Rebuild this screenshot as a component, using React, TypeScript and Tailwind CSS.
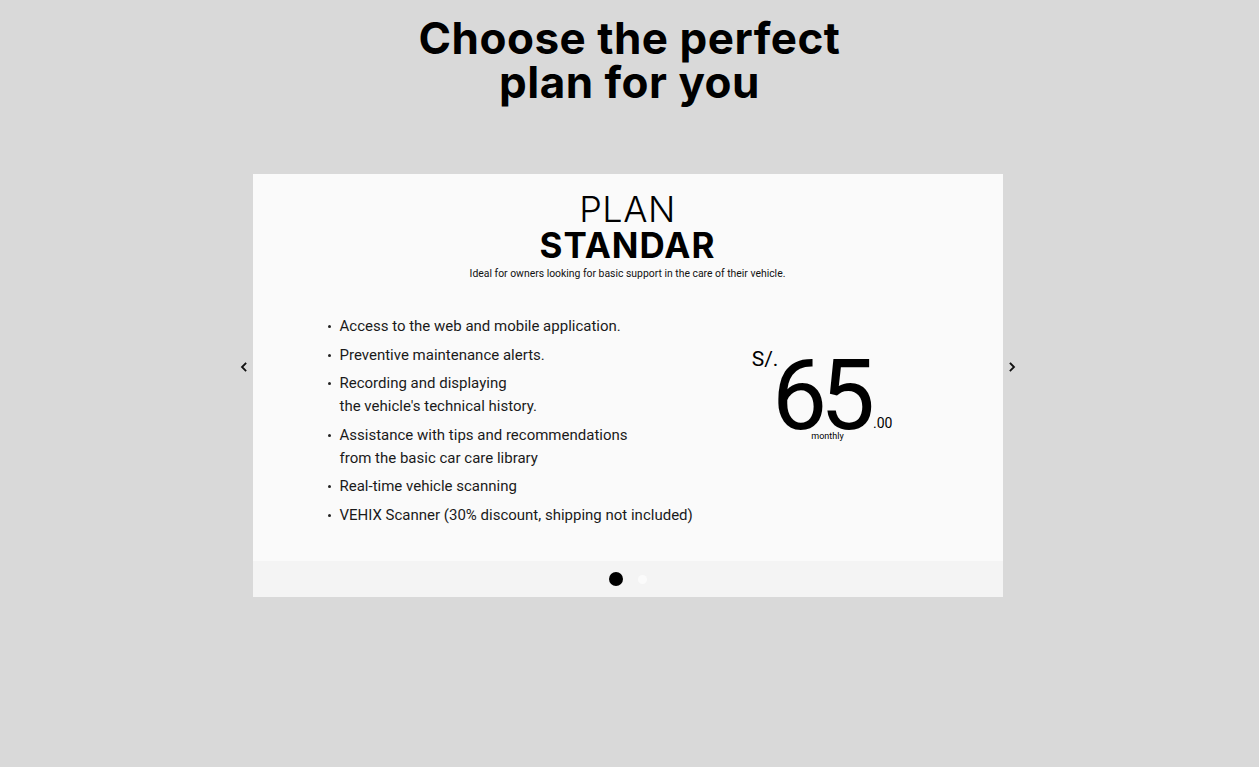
import React from "react";

const features: string[][] = [
  ["Access to the web and mobile application."],
  ["Preventive maintenance alerts."],
  ["Recording and displaying", "the vehicle's technical history."],
  ["Assistance with tips and recommendations", "from the basic car care library"],
  ["Real-time vehicle scanning"],
  ["VEHIX Scanner (30% discount, shipping not included)"],
];

function Chevron({ dir }: { dir: "left" | "right" }) {
  return (
    <svg width="8" height="10" viewBox="0 0 8 10" fill="none">
      <path
        d={dir === "left" ? "M5.5 1.5 L2 5 L5.5 8.5" : "M2.5 1.5 L6 5 L2.5 8.5"}
        stroke="#111"
        strokeWidth="1.8"
        strokeLinecap="square"
      />
    </svg>
  );
}

export default function App() {
  return (
    <div
      className="min-h-[767px] w-full bg-[#d9d9d9] flex flex-col items-center"
      style={{ fontFamily: "Roboto, 'Liberation Sans', sans-serif" }}
    >
      <h1
        className="pt-[16px] text-center text-[44px] leading-[44px] font-bold text-black tracking-[0.5px]"
        style={{ fontFamily: "Inter, 'Liberation Sans', sans-serif" }}
      >
        Choose the perfect
        <br />
        plan for you
      </h1>

      <div className="mt-[70px] flex items-start">
        <button className="mt-[173px] w-[18px] h-[40px] flex items-center justify-center">
          <Chevron dir="left" />
        </button>

        <div className="w-[750px] bg-[#fafafa] flex flex-col">
          <div className="h-[387px] flex flex-col">
            <div
              className="pt-[17px] flex flex-col items-center text-black"
              style={{ fontFamily: "Inter, 'Liberation Sans', sans-serif" }}
            >
              <div className="text-[36px] leading-[36px] font-light tracking-[0.5px]">PLAN</div>
              <div className="text-[35px] leading-[36px] font-bold tracking-[1px]">STANDAR</div>
              <div
                className="mt-[4px] text-[10.4px] leading-[14px] text-[#111]"
                style={{ fontFamily: "Roboto, sans-serif" }}
              >
                Ideal for owners looking for basic support in the care of their vehicle.
              </div>
            </div>

            <div className="mt-[34px] flex">
              <ul className="ml-[75px] flex flex-col gap-[5.5px] text-[15px] leading-[23px] text-[#1a1a1a]">
                {features.map((lines, i) => (
                  <li key={i} className="flex">
                    <span className="w-[12px] shrink-0 flex justify-start pt-[10px]">
                      <span className="block w-[3px] h-[3px] rounded-full bg-[#222]" />
                    </span>
                    <span className="flex flex-col">
                      {lines.map((l, j) => (
                        <span key={j}>{l}</span>
                      ))}
                    </span>
                  </li>
                ))}
              </ul>

              <div className="ml-auto mr-[110px] mt-[34px] flex items-start text-black">
                <span className="text-[21px] leading-[21px] -mr-[6.5px]">S/.</span>
                <span className="flex flex-col items-center -mt-[2px] mr-[5px]">
                  <span className="text-[98px] leading-[98px] tracking-[-7px]">65</span>
                  <span className="-mt-[14px] ml-[15px] text-[9px] leading-[11px]">monthly</span>
                </span>
                <span className="mt-[67px] text-[14px] leading-[14px]">.00</span>
              </div>
            </div>
          </div>

          <div className="h-[36px] bg-[#f4f4f4] flex items-center justify-center gap-[15px]">
            <span className="block w-[14px] h-[14px] rounded-full bg-black" />
            <span className="block w-[9px] h-[9px] rounded-full bg-[#fbfbfb]" />
          </div>
        </div>

        <button className="mt-[173px] w-[22px] h-[40px] flex items-center justify-start pl-[5px]">
          <Chevron dir="right" />
        </button>
      </div>
    </div>
  );
}
